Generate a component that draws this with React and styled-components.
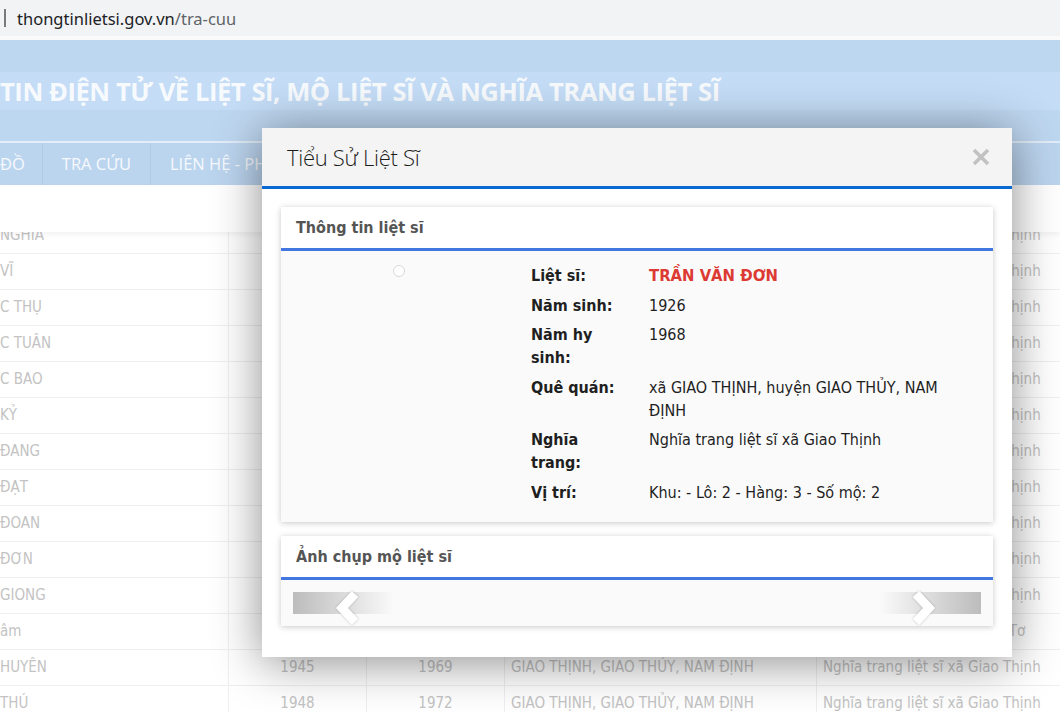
import { Fragment } from "react"
import styled, { createGlobalStyle } from "styled-components"

const GlobalStyle = createGlobalStyle`
  html, body {
    margin: 0;
    padding: 0;
    background: #fff;
  }
  body {
    width: 1060px;
    height: 712px;
    overflow: hidden;
  }
`

const Page = styled.div`
  position: relative;
  width: 1060px;
  height: 712px;
  overflow: hidden;
  background: #fff;
  font-family: "DejaVu Sans Condensed", "DejaVu Sans", sans-serif;
`

// thanh địa chỉ trình duyệt
const AddressBar = styled.div`
  height: 36px;
  background: #f1f3f4;
  display: flex;
  align-items: center;
  border-bottom: 4px solid #fafafa;
`

const Caret = styled.span`
  width: 2px;
  height: 18px;
  background: #7a7a7a;
  margin: 0 11px 0 4px;
`

const Url = styled.span`
  font-family: "Noto Sans", "Open Sans", sans-serif;
  font-size: 16.5px;
  color: #202124;
`

const UrlPath = styled.span`
  color: #5f6368;
`

// banner trang (phía sau modal)
const Banner = styled.header`
  background: #bed7f0;
`

const TitleRow = styled.div`
  height: 101px;
  display: flex;
  align-items: center;
  border-bottom: 2px solid #e2edf9;
`

const SiteTitle = styled.h1`
  margin: 0;
  width: 100%;
  padding: 2px 0 1px;
  background: #c4dcf6;
  font-family: "Open Sans", sans-serif;
  font-weight: 700;
  font-size: 25.6px;
  letter-spacing: -0.45px;
  color: #f7fafd;
  white-space: nowrap;
`

const Nav = styled.nav`
  height: 42px;
  display: flex;
  background: #bcd5ef;
`

const NavItem = styled.span`
  padding: 0 19px;
  line-height: 42px;
  font-family: "Open Sans", sans-serif;
  font-size: 16.5px;
  color: #f6f9fd;
  border-right: 1px solid #b3cce6;
  white-space: nowrap;

  &:first-child {
    padding-left: 0;
    padding-right: 17px;
  }
  &:last-child {
    border-right: none;
  }
`

const Toolbar = styled.div`
  position: relative;
  z-index: 1;
  height: 47px;
  background: #fff;
  box-shadow: 0 3px 5px rgba(0, 0, 0, 0.05);
`

const Table = styled.div`
  margin-top: -14px;
`

const Row = styled.div`
  display: grid;
  grid-template-columns: 229px 138px 138px 312px 243px;
  height: 36px;
  border-bottom: 1px solid #efefef;
  box-sizing: border-box;
`

const Cell = styled.div`
  padding: 0 6px;
  line-height: 35px;
  font-size: 15px;
  color: #c3c3c3;
  white-space: nowrap;
  overflow: hidden;
  text-align: ${(p) => (p.$center ? "center" : "left")};
  border-right: 1px solid #efefef;

  &:first-child {
    padding-left: 0;
  }
  &:last-child {
    border-right: none;
  }
`

// modal
const Modal = styled.div`
  position: absolute;
  left: 262px;
  top: 128px;
  width: 750px;
  background: #fff;
  box-shadow: 0 5px 45px rgba(0, 0, 0, 0.45);
  z-index: 10;
`

const ModalHeader = styled.div`
  height: 58px;
  display: flex;
  align-items: center;
  justify-content: space-between;
  padding: 0 22px 0 25px;
  background: #f4f4f4;
  border-bottom: 3px solid #0a68d0;
`

const ModalTitle = styled.h4`
  margin: 0;
  font-family: "Open Sans", sans-serif;
  font-weight: 300;
  font-size: 22px;
  letter-spacing: -0.3px;
  color: #1c1c1c;
`

const CloseButton = styled.span`
  display: flex;
  width: 18px;
  height: 18px;
`

const ModalBody = styled.div`
  padding: 18px 19px 31px;
  display: flex;
  flex-direction: column;
  gap: 14px;
`

const Panel = styled.section`
  background: #fafafa;
  box-shadow: 0 1px 6px rgba(0, 0, 0, 0.22);
`

const PanelHeading = styled.div`
  height: 41px;
  line-height: 42px;
  padding: 0 15px;
  background: #fff;
  border-bottom: 3px solid #4277e0;
  font-weight: 700;
  font-size: 16px;
  color: #555;
`

const InfoBody = styled.div`
  display: flex;
  padding: 13px 18px 18px 0;
`

const PhotoCol = styled.div`
  width: 236px;
  flex-shrink: 0;
  display: flex;
  justify-content: center;
  padding-top: 1px;
`

const BrokenImage = styled.span`
  width: 10px;
  height: 10px;
  border: 1px solid #d8d8d8;
  border-radius: 50%;
  background: #fff;
`

const DetailList = styled.dl`
  margin: 0 0 0 14px;
  flex: 1;
  display: grid;
  grid-template-columns: 100px 1fr;
  column-gap: 18px;
  row-gap: 6.5px;
  line-height: 23px;
  font-size: 16px;
  color: #1f1f1f;
`

const Label = styled.dt`
  font-weight: 700;
`

const Value = styled.dd`
  margin: 0;
  font-weight: ${(p) => (p.$highlight ? 700 : 400)};
  font-size: ${(p) => (p.$highlight ? "16.5px" : "16px")};
  color: ${(p) => (p.$highlight ? "#dc3a33" : "#1f1f1f")};
`

const SliderBody = styled.div`
  padding: 12px;
`

const Slider = styled.div`
  height: 22px;
  display: flex;
  justify-content: space-between;
`

const SlideControl = styled.div`
  position: relative;
  width: 101px;
  background: linear-gradient(
    to ${(p) => (p.$side === "left" ? "right" : "left")},
    #bcbcbc,
    rgba(250, 250, 250, 0)
  );
`

const Chevron = styled.svg`
  position: absolute;
  top: -6px;
  left: ${(p) => (p.$side === "left" ? "40px" : "28px")};
  filter: drop-shadow(0 0 1px rgba(0, 0, 0, 0.25));
`

const rows = [
  ["NGHĨA", "1940", "1968", "GIAO THỊNH, GIAO THỦY, NAM ĐỊNH", "Nghĩa trang liệt sĩ xã Giao Thịnh"],
  ["VĨ", "1936", "1967", "GIAO THỊNH, GIAO THỦY, NAM ĐỊNH", "Nghĩa trang liệt sĩ xã Giao Thịnh"],
  ["C THỤ", "1945", "1968", "GIAO THỊNH, GIAO THỦY, NAM ĐỊNH", "Nghĩa trang liệt sĩ xã Giao Thịnh"],
  ["C TUÂN", "1947", "1971", "GIAO THỊNH, GIAO THỦY, NAM ĐỊNH", "Nghĩa trang liệt sĩ xã Giao Thịnh"],
  ["C BAO", "1939", "1966", "GIAO THỊNH, GIAO THỦY, NAM ĐỊNH", "Nghĩa trang liệt sĩ xã Giao Thịnh"],
  ["KỶ", "1942", "1968", "GIAO THỊNH, GIAO THỦY, NAM ĐỊNH", "Nghĩa trang liệt sĩ xã Giao Thịnh"],
  ["ĐANG", "1944", "1970", "GIAO THỊNH, GIAO THỦY, NAM ĐỊNH", "Nghĩa trang liệt sĩ xã Giao Thịnh"],
  ["ĐẠT", "1950", "1972", "GIAO THỊNH, GIAO THỦY, NAM ĐỊNH", "Nghĩa trang liệt sĩ xã Giao Thịnh"],
  ["ĐOAN", "1946", "1969", "GIAO THỊNH, GIAO THỦY, NAM ĐỊNH", "Nghĩa trang liệt sĩ xã Giao Thịnh"],
  ["ĐƠN", "1926", "1968", "GIAO THỊNH, GIAO THỦY, NAM ĐỊNH", "Nghĩa trang liệt sĩ xã Giao Thịnh"],
  ["GIONG", "1948", "1972", "GIAO THỊNH, GIAO THỦY, NAM ĐỊNH", "Nghĩa trang liệt sĩ xã Giao Thịnh"],
  ["âm", "1949", "1971", "GIAO THỊNH, GIAO THỦY, NAM ĐỊNH", "Nghĩa trang liệt sĩ tỉnh Đắk Tơ"],
  ["HUYÊN", "1945", "1969", "GIAO THỊNH, GIAO THỦY, NAM ĐỊNH", "Nghĩa trang liệt sĩ xã Giao Thịnh"],
  ["THÚ", "1948", "1972", "GIAO THỊNH, GIAO THỦY, NAM ĐỊNH", "Nghĩa trang liệt sĩ xã Giao Thịnh"],
]

const details = [
  { label: "Liệt sĩ:", value: "TRẦN VĂN ĐƠN", highlight: true },
  { label: "Năm sinh:", value: "1926" },
  { label: "Năm hy sinh:", value: "1968" },
  { label: "Quê quán:", value: "xã GIAO THỊNH, huyện GIAO THỦY, NAM ĐỊNH" },
  { label: "Nghĩa trang:", value: "Nghĩa trang liệt sĩ xã Giao Thịnh" },
  { label: "Vị trí:", value: "Khu: - Lô: 2 - Hàng: 3 - Số mộ: 2" },
]

function App() {
  return (
    <Page>
      <GlobalStyle />
      <AddressBar>
        <Caret />
        <Url>
          thongtinlietsi.gov.vn<UrlPath>/tra-cuu</UrlPath>
        </Url>
      </AddressBar>

      <Banner>
        <TitleRow>
          <SiteTitle>TIN ĐIỆN TỬ VỀ LIỆT SĨ, MỘ LIỆT SĨ VÀ NGHĨA TRANG LIỆT SĨ</SiteTitle>
        </TitleRow>
        <Nav>
          <NavItem>ĐỒ</NavItem>
          <NavItem>TRA CỨU</NavItem>
          <NavItem>LIÊN HỆ - PHẢN HỒI</NavItem>
        </Nav>
      </Banner>

      <Toolbar />
      <Table>
        {rows.map((r, i) => (
          <Row key={i}>
            <Cell>{r[0]}</Cell>
            <Cell $center>{r[1]}</Cell>
            <Cell $center>{r[2]}</Cell>
            <Cell>{r[3]}</Cell>
            <Cell>{r[4]}</Cell>
          </Row>
        ))}
      </Table>

      <Modal>
        <ModalHeader>
          <ModalTitle>Tiểu Sử Liệt Sĩ</ModalTitle>
          <CloseButton>
            <svg width="18" height="18" viewBox="0 0 18 18">
              <path d="M2 2 L16 16 M16 2 L2 16" stroke="#c2c2c2" strokeWidth="3.6" />
            </svg>
          </CloseButton>
        </ModalHeader>

        <ModalBody>
          <Panel>
            <PanelHeading>Thông tin liệt sĩ</PanelHeading>
            <InfoBody>
              <PhotoCol>
                <BrokenImage />
              </PhotoCol>
              <DetailList>
                {details.map((d) => (
                  <Fragment key={d.label}>
                    <Label>{d.label}</Label>
                    <Value $highlight={d.highlight}>{d.value}</Value>
                  </Fragment>
                ))}
              </DetailList>
            </InfoBody>
          </Panel>

          <Panel>
            <PanelHeading>Ảnh chụp mộ liệt sĩ</PanelHeading>
            <SliderBody>
              <Slider>
                <SlideControl $side="left">
                  <Chevron $side="left" width="30" height="42" viewBox="0 0 30 42">
                    <polyline points="22,8 9,22 22,36" fill="none" stroke="#fff" strokeWidth="9" />
                  </Chevron>
                </SlideControl>
                <SlideControl $side="right">
                  <Chevron $side="right" width="30" height="42" viewBox="0 0 30 42">
                    <polyline points="8,8 21,22 8,36" fill="none" stroke="#fff" strokeWidth="9" />
                  </Chevron>
                </SlideControl>
              </Slider>
            </SliderBody>
          </Panel>
        </ModalBody>
      </Modal>
    </Page>
  )
}

export default App
